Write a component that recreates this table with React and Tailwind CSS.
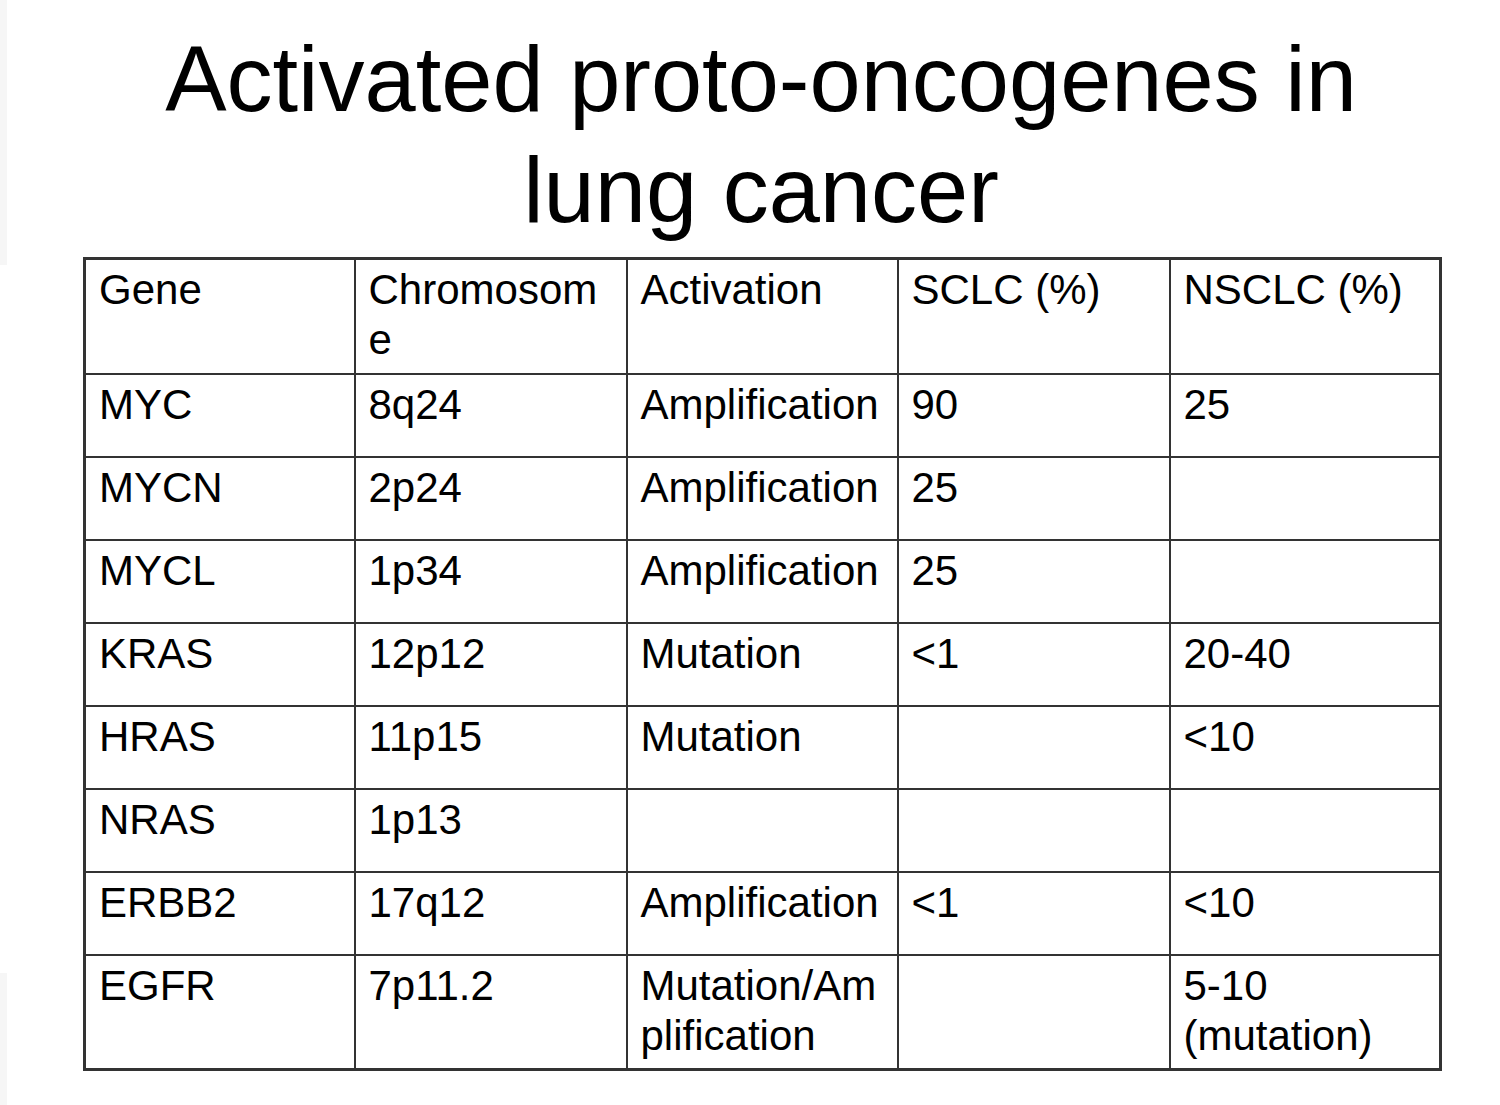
import React from 'react';

const rows = [
  ['MYC', '8q24', 'Amplification', '90', '25'],
  ['MYCN', '2p24', 'Amplification', '25', ''],
  ['MYCL', '1p34', 'Amplification', '25', ''],
  ['KRAS', '12p12', 'Mutation', '<1', '20-40'],
  ['HRAS', '11p15', 'Mutation', '', '<10'],
  ['NRAS', '1p13', '', '', ''],
  ['ERBB2', '17q12', 'Amplification', '<1', '<10'],
];

const Cell = ({ children }) => (
  <td className="border-2 border-[#333] align-top px-[13px] pt-[5px] text-[42px] leading-[50px] text-black">
    {children}
  </td>
);

const App = () => {
  return (
    <div
      className="flex w-[1500px] h-[1105px] bg-white overflow-hidden"
      style={{ fontFamily: '"Liberation Sans", Arial, sans-serif' }}
    >
      {/* faint slide-edge strip */}
      <div className="w-[7px] flex flex-col">
        <div className="h-[265px] bg-[#f6f6f6]"></div>
        <div className="flex-1"></div>
        <div className="h-[132px] bg-[#f6f6f6]"></div>
      </div>

      <div className="ml-[76px] w-[1356px] flex flex-col">
        <h1 className="pt-[24px] text-center text-[92px] leading-[111px] font-normal text-black">
          Activated proto-oncogenes in
          <br />
          lung cancer
        </h1>

        <table className="mt-[11px] w-[1356px] table-fixed border-collapse border-[3px] border-[#333]">
          <colgroup>
            <col className="w-[270px]" />
            <col className="w-[272px]" />
            <col className="w-[271px]" />
            <col className="w-[272px]" />
            <col className="w-[271px]" />
          </colgroup>
          <tbody>
            <tr className="h-[115px]">
              <Cell>Gene</Cell>
              <Cell>
                Chromosom
                <br />e
              </Cell>
              <Cell>Activation</Cell>
              <Cell>SCLC (%)</Cell>
              <Cell>NSCLC (%)</Cell>
            </tr>
            {rows.map((r) => (
              <tr key={r[0]} className="h-[83px]">
                {r.map((v, i) => (
                  <Cell key={i}>{v}</Cell>
                ))}
              </tr>
            ))}
            <tr className="h-[115px]">
              <Cell>EGFR</Cell>
              <Cell>7p11.2</Cell>
              <Cell>
                Mutation/Am
                <br />
                plification
              </Cell>
              <Cell></Cell>
              <Cell>
                5-10
                <br />
                (mutation)
              </Cell>
            </tr>
          </tbody>
        </table>
      </div>
    </div>
  );
};

export default App;
